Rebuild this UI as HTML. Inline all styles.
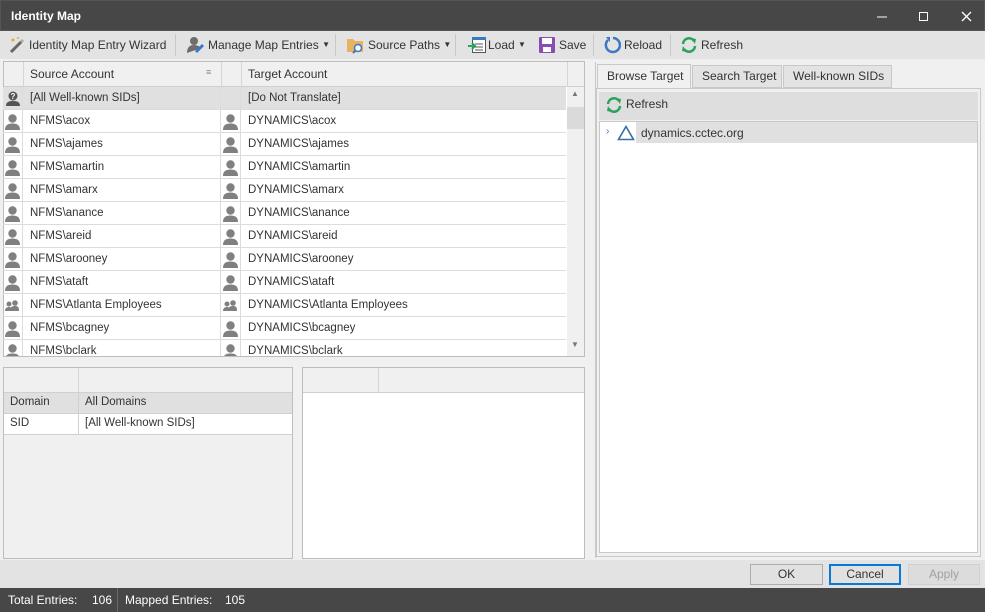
<!DOCTYPE html>
<html><head><meta charset="utf-8"><style>
*{box-sizing:border-box;margin:0;padding:0}
body{width:985px;height:612px;position:relative;overflow:hidden;background:#e3e3e3;font-family:"Segoe UI","Liberation Sans",sans-serif;font-size:12px;color:#333}
.a{position:absolute}
.tb{left:0;top:0;width:985px;height:31px;background:#474747;color:#fff;font-weight:bold;font-size:12px;border:1px solid #555}
.tool{left:0;top:31px;width:985px;height:28px;background:#e3e3e3}
.ti{top:36px;height:18px;line-height:18px;font-size:12px;color:#333;white-space:nowrap}
.ti small{font-size:8px;vertical-align:2px}
.sep{top:34px;width:1px;height:22px;background:#c8c8c8}
.content{left:0;top:59px;width:985px;height:501px;background:#f0f0f0}
.grid{left:3px;top:61px;width:582px;height:296px;border:1px solid #bdbdbd;background:#fff;overflow:hidden}
.row{position:absolute;left:0;height:23px;width:563px;border-bottom:1px solid #dcdcdc;line-height:23px;font-size:11.5px}
.row span{position:absolute}
.row .c1{left:27px}.row .c2{left:245px}
.row .v{position:absolute;top:0;width:1px;height:23px;background:#dcdcdc}
.ic{position:absolute;top:4px}
.status{left:0;top:588px;width:985px;height:24px;background:#474747;color:#fff;font-size:12px;line-height:24px}
.btn{top:564px;height:21px;border:1px solid #adadad;background:#e1e1e1;text-align:center;line-height:19px;font-size:12px}
</style></head><body>
<div class="a tb"><span class="a" style="left:10px;top:8px">Identity Map</span>
<svg class="a" style="left:876px;top:8px" width="100" height="16"><line x1="0" y1="8" x2="10" y2="8" stroke="#fff"/><rect x="42.5" y="3.5" width="8" height="8" fill="none" stroke="#fff"/><path d="M85 3l9 9M94 3l-9 9" stroke="#fff" stroke-width="1.3"/></svg>
</div>
<div class="a tool"></div>
<svg class="a" style="left:8px;top:36px" width="18" height="18"><path d="M3 16L13 6" stroke="#666" stroke-width="3"/><path d="M13 6l2-2" stroke="#aaa" stroke-width="3"/><circle cx="5" cy="4" r="1.5" fill="#e8a33c"/><circle cx="10" cy="2" r="1" fill="#e8a33c"/></svg>
<div class="a ti" style="left:29px">Identity Map Entry Wizard</div>
<div class="a sep" style="left:175px"></div>
<svg class="a" style="left:187px;top:36px" width="18" height="18"><circle cx="7" cy="5" r="4" fill="#6d6d6d"/><path d="M0 17c0-6 3-8 7-8s6 2 7 3z" fill="#6d6d6d"/><path d="M9 16l7-7" stroke="#3a78c4" stroke-width="3"/></svg>
<div class="a ti" style="left:208px">Manage Map Entries <small>▼</small></div>
<div class="a sep" style="left:335px"></div>
<svg class="a" style="left:347px;top:37px" width="18" height="17"><path d="M0 2h6l2 2h8v11H0z" fill="#e6b461"/><circle cx="11" cy="11" r="3.5" fill="#fff" stroke="#3a78c4" stroke-width="1.5"/><path d="M8.5 13.5L6 16" stroke="#3a78c4" stroke-width="2"/></svg>
<div class="a ti" style="left:368px">Source Paths <small>▼</small></div>
<div class="a sep" style="left:455px"></div>
<svg class="a" style="left:468px;top:36px" width="18" height="18"><rect x="4.5" y="1.5" width="13" height="15" fill="#fff" stroke="#555"/><rect x="4" y="1" width="14" height="3" fill="#3a78c4"/><path d="M7 8h8M7 11h8M7 14h8" stroke="#555"/><path d="M0 10h6M4 7l3 3-3 3" stroke="#2aa35a" stroke-width="2" fill="none"/></svg>
<div class="a ti" style="left:488px">Load <small>▼</small></div>
<svg class="a" style="left:539px;top:37px" width="16" height="16"><rect x="0" y="0" width="16" height="16" rx="1" fill="#8a4bb5"/><rect x="3" y="1" width="10" height="6" fill="#fff"/><rect x="4" y="10" width="8" height="5" fill="#fff"/></svg>
<div class="a ti" style="left:559px">Save</div>
<div class="a sep" style="left:593px"></div>
<svg class="a" style="left:603px;top:36px" width="18" height="18"><path d="M5 4A7 7 0 1 0 10 2" fill="none" stroke="#3a78c4" stroke-width="2.5"/><path d="M3 1l4 0 0 5z" fill="#3a78c4"/></svg>
<div class="a ti" style="left:624px">Reload</div>
<div class="a sep" style="left:670px"></div>
<svg class="a" style="left:680px;top:36px" width="18" height="18"><path d="M3 8A6 6 0 0 1 14 5M15 10A6 6 0 0 1 4 13" fill="none" stroke="#2aa35a" stroke-width="2.5"/><path d="M11 2l5 1-1 5zM7 16l-5-1 1-5z" fill="#2aa35a"/></svg>
<div class="a ti" style="left:701px">Refresh</div>

<div class="a content"></div>
<div class="a grid">
 <div class="a" style="left:0;top:0;width:580px;height:25px;background:#f0f0f0;border-bottom:1px solid #d0d0d0"></div>
 <div class="a" style="left:19px;top:0;width:1px;height:25px;background:#d5d5d5"></div>
 <div class="a" style="left:217px;top:0;width:1px;height:25px;background:#d5d5d5"></div>
 <div class="a" style="left:237px;top:0;width:1px;height:25px;background:#d5d5d5"></div>
 <div class="a" style="left:563px;top:0;width:1px;height:25px;background:#d5d5d5"></div>
 <span class="a" style="left:26px;top:5px;font-size:12px">Source Account</span>
 <span class="a" style="left:202px;top:5px;font-size:9px;color:#888">≡</span>
 <span class="a" style="left:244px;top:5px;font-size:12px">Target Account</span>
 <div class="a" style="left:563px;top:25px;width:17px;height:269px;background:#f0f0f0"></div>
 <div class="a" style="left:563px;top:45px;width:17px;height:22px;background:#dadada"></div>
 <span class="a" style="left:567px;top:27px;font-size:8px;color:#777">▲</span>
 <span class="a" style="left:567px;top:278px;font-size:8px;color:#777">▼</span>
</div>

<div class="a" style="left:3px;top:367px;width:290px;height:192px;border:1px solid #bdbdbd;background:#f0f0f0">
 <div class="a" style="left:74px;top:0;width:1px;height:24px;background:#d5d5d5"></div>
 <div class="a" style="left:0;top:24px;width:288px;height:21px;background:#e0e0e0;border-top:1px solid #d0d0d0"></div>
 <div class="a" style="left:0;top:45px;width:288px;height:22px;background:#fff;border-top:1px solid #d0d0d0;border-bottom:1px solid #d0d0d0"></div>
 <div class="a" style="left:74px;top:24px;width:1px;height:43px;background:#d0d0d0"></div>
 <span class="a" style="left:6px;top:28px;font-size:11.5px">Domain</span>
 <span class="a" style="left:81px;top:28px;font-size:11.5px">All Domains</span>
 <span class="a" style="left:6px;top:49px;font-size:11.5px">SID</span>
 <span class="a" style="left:81px;top:49px;font-size:11.5px">[All Well-known SIDs]</span>
</div>
<div class="a" style="left:302px;top:367px;width:283px;height:192px;border:1px solid #bdbdbd;background:#fff">
 <div class="a" style="left:0;top:0;width:281px;height:25px;background:#f0f0f0;border-bottom:1px solid #d0d0d0"></div>
 <div class="a" style="left:75px;top:0;width:1px;height:25px;background:#d5d5d5"></div>
</div>

<div class="a" style="left:595px;top:62px;width:1px;height:496px;background:#c8c8c8"></div>
<div class="a" style="left:597px;top:64px;width:94px;height:26px;background:#f0f0f0;border:1px solid #c8c8c8;border-bottom:none"></div>
<span class="a" style="left:607px;top:69px">Browse Target</span>
<div class="a" style="left:692px;top:65px;width:90px;height:23px;background:#e3e3e3;border:1px solid #c8c8c8"></div>
<span class="a" style="left:702px;top:69px">Search Target</span>
<div class="a" style="left:783px;top:65px;width:109px;height:23px;background:#e3e3e3;border:1px solid #c8c8c8"></div>
<span class="a" style="left:793px;top:69px">Well-known SIDs</span>
<div class="a" style="left:596px;top:88px;width:385px;height:469px;border:1px solid #c8c8c8;background:#f0f0f0">
 <div class="a" style="left:2px;top:3px;width:379px;height:28px;background:#dedede"></div>
 <div class="a" style="left:2px;top:32px;width:379px;height:432px;background:#fff;border:1px solid #c8c8c8"></div>
 <div class="a" style="left:39px;top:33px;width:341px;height:21px;background:#e0e0e0"></div>
</div>
<svg class="a" style="left:605px;top:96px" width="18" height="18"><path d="M3 8A6 6 0 0 1 14 5M15 10A6 6 0 0 1 4 13" fill="none" stroke="#2aa35a" stroke-width="2.5"/><path d="M11 2l5 1-1 5zM7 16l-5-1 1-5z" fill="#2aa35a"/></svg>
<span class="a" style="left:626px;top:97px;font-size:12px">Refresh</span>
<span class="a" style="left:606px;top:126px;font-size:10px;color:#3a78c4">›</span>
<svg class="a" style="left:617px;top:125px" width="18" height="16"><path d="M9 1.5L16.5 14.5H1.5Z" fill="none" stroke="#3a6ea8" stroke-width="1.6"/></svg>
<span class="a" style="left:641px;top:126px">dynamics.cctec.org</span>

<div class="a btn" style="left:750px;width:73px">OK</div>
<div class="a btn" style="left:829px;width:72px;border:2px solid #0a78d7;line-height:17px">Cancel</div>
<div class="a btn" style="left:908px;width:72px;color:#a0a0a0;background:#dcdcdc;border-color:#cfcfcf">Apply</div>

<div class="a status"><span class="a" style="left:8px">Total Entries:</span><span class="a" style="left:92px">106</span>
<div class="a" style="left:117px;top:0;width:1px;height:24px;background:#6a6a6a"></div>
<span class="a" style="left:125px">Mapped Entries:</span><span class="a" style="left:225px">105</span></div>

<div class="a" style="left:3px;top:87px;width:563px;height:269px;overflow:hidden">
<div class="row" style="top:0;background:#e0e0e0"><svg class="ic" style="left:3px" width="14" height="15"><circle cx="7" cy="5" r="4.5" fill="#555"/><text x="4.5" y="8" font-size="8" font-weight="bold" fill="#fff" font-family="Liberation Sans">?</text><path d="M0 15c0-4 3-5 7-5s7 1 7 5z" fill="#555"/></svg><span class="c1">[All Well-known SIDs]</span><span class="c2">[Do Not Translate]</span><i class="v" style="left:19px"></i><i class="v" style="left:217px"></i><i class="v" style="left:237px"></i></div>
</div>
<div class="a" id="r2" style="left:3px;top:110px;width:563px;height:246px;overflow:hidden"></div>
<script>
var names=["acox","ajames","amartin","amarx","anance","areid","arooney","ataft","Atlanta Employees","bcagney","bclark"];
var u='<svg class="ic" width="15" height="16"><circle cx="7.5" cy="4.5" r="4.2" fill="#808080"/><path d="M0 16c0-5 3-6.5 7.5-6.5s7.5 1.5 7.5 6.5z" fill="#808080"/></svg>';
var g='<svg class="ic" width="14" height="15"><circle cx="4" cy="6" r="2.5" fill="#808080"/><circle cx="10" cy="5" r="2.8" fill="#808080"/><path d="M0 13c0-3 2-4 4-4s3 1 3 4zM5 13c0-4 2-5 5-5s4 1 4 5z" fill="#808080"/></svg>';
var h='';
names.forEach(function(n,i){var ic=n.indexOf(' ')>0?g:u;
h+='<div class="row" style="top:'+(i*23)+'px"><span style="left:2px;top:0">'+ic+'</span><span style="left:220px;top:0">'+ic+'</span><span class="c1">NFMS\\'+n+'</span><span class="c2">DYNAMICS\\'+n+'</span><i class="v" style="left:19px"></i><i class="v" style="left:217px"></i><i class="v" style="left:237px"></i></div>';});
document.getElementById('r2').innerHTML=h;
</script>
</body></html>
